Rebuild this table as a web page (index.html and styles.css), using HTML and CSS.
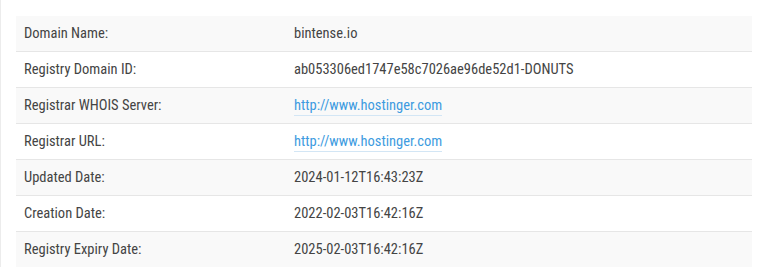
FILE: index.html
```html
<!DOCTYPE html>
<html lang="en">
<head>
  <meta charset="UTF-8">
  <title>WHOIS</title>
  <link rel="stylesheet" href="styles.css">
</head>
<body>

  <div class="panel">
    <table class="whois">
      <tr><td class="key">Domain Name:</td><td>bintense.io</td></tr>
      <tr><td class="key">Registry Domain ID:</td><td>ab053306ed1747e58c7026ae96de52d1-DONUTS</td></tr>
      <tr><td class="key">Registrar WHOIS Server:</td><td><a href="#">http://www.hostinger.com</a></td></tr>
      <tr><td class="key">Registrar URL:</td><td><a href="#">http://www.hostinger.com</a></td></tr>
      <tr><td class="key">Updated Date:</td><td>2024-01-12T16:43:23Z</td></tr>
      <tr><td class="key">Creation Date:</td><td>2022-02-03T16:42:16Z</td></tr>
      <tr><td class="key">Registry Expiry Date:</td><td>2025-02-03T16:42:16Z</td></tr>
    </table>
  </div>

</body>
</html>
```

FILE: styles.css
```css
body {
  margin: 0;
  background: #fff;
  color: #444;
  font-family: Roboto, 'Liberation Sans', sans-serif;
  font-size: 14.5px;
  font-stretch: 80%;
}

.panel {
  border-left: 1px solid #ececec;
  padding: 16px 16px 0 15px;
}

.whois {
  width: 100%;
  border-collapse: collapse;
  table-layout: fixed;
}

.whois td {
  height: 35px;
  padding: 0 8px;
  border-bottom: 1px solid #e6e6e6;
  vertical-align: middle;
}

.whois tr:nth-child(odd) { background: #f9f9f9; }

.whois .key { width: 254px; }

.whois a {
  color: #3d9be0;
  text-decoration: none;
  border-bottom: 1px solid #d3e6f5;
  padding-bottom: 1px;
}
```
